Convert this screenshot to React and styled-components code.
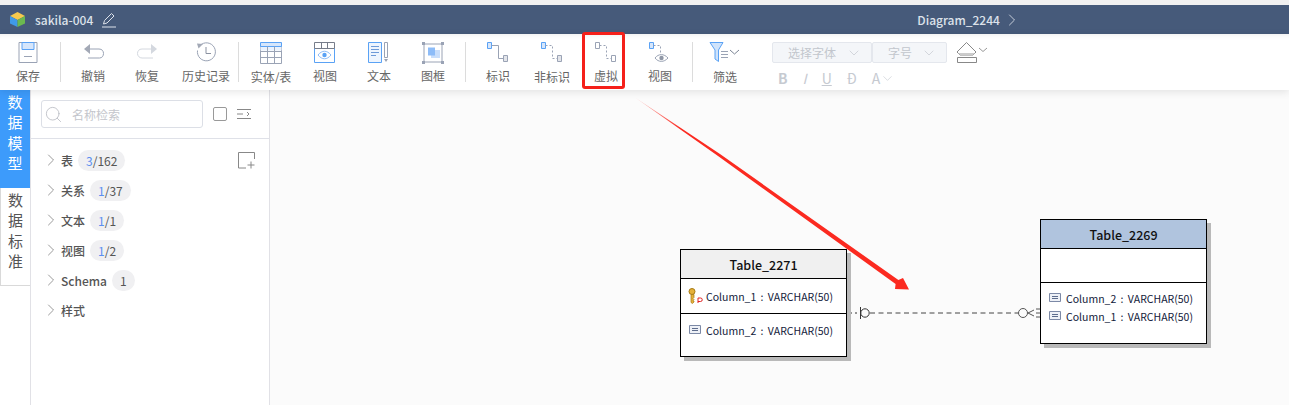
import React from "react";
import styled, { createGlobalStyle } from "styled-components";
import { ChevronRight, ChevronDown, Search } from "lucide-react";

const GlobalStyle = createGlobalStyle`
  html, body {
    margin: 0;
    background: #fff;
  }
  body {
    font-family: "Noto Sans CJK SC", "Noto Sans", sans-serif;
    font-size: 12px;
    color: #555;
  }
`;

const Page = styled.div`
  width: 1289px;
  height: 405px;
  overflow: hidden;
  display: flex;
  flex-direction: column;
  position: relative;
  border-top: 5px solid #f1f1f1;
  box-sizing: border-box;
`;

const Header = styled.header`
  height: 29px;
  flex: none;
  background: #465a7a;
  display: flex;
  align-items: center;
  padding-left: 9px;
  color: #dde2ea;
  position: relative;
`;

const ProjectName = styled.span`
  font-size: 12px;
  font-weight: 500;
  margin-left: 9px;
  margin-right: 8px;
`;

const DiagramTitle = styled.div`
  display: flex;
  align-items: center;
  gap: 2px;
  margin-left: 800px;
  font-size: 12px;
  font-weight: 500;
`;

const Toolbar = styled.div`
  height: 56px;
  flex: none;
  background: #fff;
  display: flex;
  align-items: flex-start;
  padding-left: 1px;
  box-shadow: 0 2px 8px rgba(0, 0, 0, 0.1), inset 0 6px 6px -6px rgba(0, 0, 0, 0.1);
  position: relative;
  z-index: 2;
`;

const Tool = styled.div`
  width: 54px;
  height: 56px;
  flex: none;
  display: flex;
  flex-direction: column;
  align-items: center;
  margin-left: ${p => p.$gap || 0}px;
  svg {
    height: 24px;
    margin-top: 7px;
    display: block;
  }
`;

const ToolLabel = styled.span`
  font-size: 12px;
  line-height: 16px;
  margin-top: ${p => (p.$low ? 4 : 3)}px;
  color: #666;
  white-space: nowrap;
`;

const Separator = styled.div`
  width: 1px;
  height: 40px;
  flex: none;
  background: #dcdcdc;
  margin: 8px 5px 0;
`;

const FontTools = styled.div`
  margin-left: 20px;
  margin-top: 7px;
  display: flex;
  flex-direction: column;
  gap: 4px;
`;

const FontRow = styled.div`
  display: flex;
  align-items: center;
`;

const FontSelect = styled.div`
  width: ${p => p.$width}px;
  height: 21px;
  box-sizing: border-box;
  background: #f4f6f9;
  border: 1px solid #e4e7ed;
  border-radius: 2px;
  display: flex;
  align-items: center;
  justify-content: space-between;
  padding: 0 9px 0 15px;
  color: #c2c6cd;
  font-size: 12px;
`;

const FillSlot = styled.span`
  margin-left: 9px;
  display: flex;
`;

const StyleRow = styled.div`
  display: flex;
  align-items: center;
  gap: 15px;
  padding-left: 6px;
  color: #c6cad1;
  font-size: 14px;
  line-height: 20px;
`;

const StyleGlyph = styled.span`
  display: flex;
  align-items: center;
  font-weight: ${p => (p.$bold ? 700 : 400)};
  font-style: ${p => (p.$italic ? "italic" : "normal")};
  text-decoration: ${p => (p.$underline ? "underline" : "none")};
`;

const Body = styled.div`
  flex: 1;
  display: flex;
  min-height: 0;
`;

const TabRail = styled.nav`
  width: 31px;
  flex: none;
  border-right: 1px solid #e1e1e6;
  box-sizing: border-box;
`;

const Tab = styled.div`
  width: 30px;
  height: 98px;
  box-sizing: border-box;
  display: flex;
  justify-content: center;
  text-align: center;
  font-size: 15px;
  line-height: 20.400px;
  padding: 2px 7px 0;
  background: ${p => (p.$active ? "#3d9bfb" : "#fff")};
  color: ${p => (p.$active ? "#fff" : "#555")};
  border-bottom: ${p => (p.$active ? "none" : "1px solid #d9d9d9")};
  border-left: ${p => (p.$active ? "none" : "1px solid #d9d9d9")};
`;

const Panel = styled.aside`
  width: 239px;
  flex: none;
  border-right: 1px solid #e1e1e6;
  box-sizing: border-box;
  background: #fff;
`;

const SearchBar = styled.div`
  height: 49px;
  box-sizing: border-box;
  border-bottom: 1px solid #dfe1e8;
  display: flex;
  align-items: center;
  padding: 0 17px 0 10px;
`;

const SearchBox = styled.div`
  width: 162px;
  height: 28px;
  box-sizing: border-box;
  border: 1px solid #dcdfe6;
  border-radius: 3px;
  display: flex;
  align-items: center;
  padding-left: 2px;
  gap: 9px;
  color: #c4c6cc;
  font-size: 12px;
`;

const CheckBox = styled.div`
  width: 14px;
  height: 14px;
  box-sizing: border-box;
  border: 1px solid #999;
  border-radius: 2px;
  margin-left: 10px;
  margin-right: 10px;
`;

const TreeList = styled.ul`
  list-style: none;
  margin: 6px 0 0;
  padding: 0 0 0 10px;
  position: relative;
`;

const TreeRow = styled.li`
  height: 30px;
  display: flex;
  align-items: center;
  color: #555;
  font-size: 12px;
  font-weight: 500;
`;

const Count = styled.span`
  height: 21px;
  box-sizing: border-box;
  padding: 0 8px;
  margin-left: 5px;
  border-radius: 11px;
  background: #f0f0f2;
  display: flex;
  align-items: center;
  font-weight: 400;
`;

const Selected = styled.span`
  color: #5b8ff0;
`;

const AddButton = styled.svg`
  position: absolute;
  right: 14px;
  top: 7px;
`;

const Canvas = styled.main`
  flex: 1;
  position: relative;
  background: #fbfbfb;
  overflow: hidden;
`;

const Drawing = styled.svg`
  position: absolute;
  left: 0;
  top: 0;
`;

const TableNode = styled.div`
  position: absolute;
  left: ${p => p.$x}px;
  top: ${p => p.$y}px;
  width: 167px;
  box-sizing: border-box;
  background: #fff;
  border: 1.5px solid #000;
  box-shadow: 4px 4px 0 #b9b9b9;
  color: #111;
`;

const TableTitle = styled.div`
  height: 29px;
  box-sizing: border-box;
  border-bottom: 1.5px solid #000;
  background: ${p => p.$fill};
  font-size: 12.5px;
  font-weight: 500;
  display: flex;
  align-items: center;
  justify-content: center;
`;

const TableSection = styled.div`
  height: ${p => p.$height}px;
  box-sizing: border-box;
  padding: ${p => p.$pad}px 0 0 8px;
  border-top: ${p => (p.$line ? "1.5px solid #000" : "none")};
`;

const ColumnRow = styled.div`
  height: 18px;
  display: flex;
  align-items: center;
  font-size: 10.500px;
  word-spacing: 2px;
  color: #12203a;
  white-space: nowrap;
`;

const ColumnIcon = styled.span`
  width: 17px;
  flex: none;
  display: flex;
  align-items: center;
`;

const KeySvg = styled.svg`
  margin-left: -1.500px;
  flex: none;
`;

const RedBox = styled.div`
  position: absolute;
  left: 582px;
  top: 27px;
  width: 43px;
  height: 57px;
  box-sizing: border-box;
  border: 3px solid #f5201a;
  border-radius: 3px;
  z-index: 3;
`;

const grayLine = "#9aa3b5";
const blueLine = "#5aa2f5";

const SaveIcon = () => (
  <svg width="22" height="24" viewBox="0 0 22 24" fill="none">
    <path d="M2 1.500h18v20H2z" stroke={grayLine} />
    <path d="M5 1.500h12v7H5z" fill="#d6e6fb" stroke={blueLine} />
    <path d="M7 15.500h8" stroke={grayLine} />
  </svg>
);

const UndoIcon = () => (
  <svg width="24" height="24" viewBox="0 0 24 24" fill="none">
    <path d="M3 8l6-5v10z" fill="#a3a9b6" />
    <path d="M9 8h9c3 0 4.500 2 4.500 4.500s-1.500 4.500-4 4.500H7" stroke={grayLine} />
  </svg>
);

const RedoIcon = () => (
  <svg width="22" height="24" viewBox="0 0 22 24" fill="none">
    <path d="M21 8l-6-5v10z" fill="#d4d8df" />
    <path d="M15 8H6c-3 0-4.500 2-4.500 4.500S3.500 17 6 17h11" stroke="#d4d8df" />
  </svg>
);

const HistoryIcon = () => (
  <svg width="22" height="24" viewBox="0 0 22 24" fill="none">
    <path d="M5 4.500a9 9 0 1 1-2.500 5" stroke={grayLine} />
    <path d="M2 2.500l6 .5-4.500 4.500z" fill="#a3a9b6" />
    <path d="M11 6v6.500h5" stroke="#8b92a1" />
  </svg>
);

const TableIcon = () => (
  <svg width="22" height="24" viewBox="0 0 22 24" fill="none">
    <path d="M.5 3.500h21v19H.5z" stroke={grayLine} />
    <path d="M.5 5.500h21v4H.5z" fill="#eaf2fd" />
    <path d="M.5 1.500h21v4H.5z" fill="#d6e6fb" stroke={blueLine} />
    <path d="M.5 10.500h21M.5 16.500h21M7.500 5.500v17M14.500 5.500v17" stroke={grayLine} />
  </svg>
);

const ViewIcon = () => (
  <svg width="22" height="24" viewBox="0 0 22 24" fill="none">
    <path d="M.5 7.500h20v14H.5z" stroke={blueLine} />
    <path d="M.5 1.500h20v6H.5zM7.500 1.500v6M13.500 1.500v6" stroke="#777d8a" />
    <path d="M4 14c4-5 9-5 13 0-4 5-9 5-13 0z" stroke="#8dbcf8" />
    <circle cx="10.500" cy="14" r="2.200" fill={blueLine} />
  </svg>
);

const TextIcon = () => (
  <svg width="22" height="24" viewBox="0 0 22 24" fill="none">
    <path d="M.5 1.500h13v20H.5z" fill="#eef5fe" stroke={blueLine} />
    <path d="M3 5.500h8M3 8.500h8M3 11.500h8M3 14.500h5" stroke="#6d9ad8" />
    <path d="M16.500 1.500h3v15h-3z" stroke={grayLine} />
    <path d="M16 18h4l-2 3z" fill={grayLine} />
  </svg>
);

const FrameIcon = () => (
  <svg width="22" height="24" viewBox="0 0 22 24" fill="none">
    <path d="M2 3h18v18H2z" stroke={grayLine} />
    <path d="M0 1h3v3H0zM19 1h3v3h-3zM0 20h3v3H0zM19 20h3v3h-3z" fill={grayLine} />
    <path d="M9 9h9v8H9z" fill="#c9defb" />
    <path d="M6 6.500h7v8H6z" fill="#8dbcf8" />
  </svg>
);

const RelationIcon = ({ dashed, plain }) => (
  <svg width="22" height="24" viewBox="0 0 22 24" fill="none">
    <path d="M.5 1.500h4v6h-4z" fill={plain ? "none" : "#d6e6fb"} stroke={plain ? grayLine : blueLine} />
    <path d="M4.500 4.500h7v13h5" stroke={grayLine} strokeDasharray={dashed ? "2 2" : undefined} />
    <path d="M16.500 14.500h4v6h-4z" fill={plain ? "none" : "#e3e5ea"} stroke={grayLine} />
  </svg>
);

const RelationViewIcon = () => (
  <svg width="22" height="24" viewBox="0 0 22 24" fill="none">
    <path d="M.5 1.500h4v6h-4z" fill="#d6e6fb" stroke={blueLine} />
    <path d="M4.500 4.500h7v7" stroke={grayLine} strokeDasharray="2 2" />
    <path d="M6 17c3.500-4.500 9-4.500 13 0-4 4.500-9.500 4.500-13 0z" stroke={grayLine} />
    <circle cx="12.500" cy="17" r="2.200" fill="#8f96a5" />
  </svg>
);

const FilterIcon = () => (
  <svg width="33" height="24" viewBox="0 0 33 24" fill="none">
    <path d="M1 1.500h13L9.500 9v11.500L6 18V9z" fill="#cfe3fb" stroke={blueLine} />
    <path d="M12 10.500h7M12 13.500h7M12 16.500h7" stroke={grayLine} />
    <path d="M21 9l4.500 4L30 9" stroke="#7b8494" />
  </svg>
);

const FillIcon = () => (
  <svg width="33" height="23" viewBox="0 0 33 23" fill="none">
    <path d="M1 11L10.500 1.500 20 11l-3 3H4z" stroke="#888" fill="#fff" />
    <path d="M2 12h17l-2 2H4z" fill="#ccc" />
    <path d="M1.500 16.500h19v5h-19z" stroke="#888" />
    <path d="M23 7l4 3.500L31 7" stroke="#999" />
  </svg>
);

const CubeLogo = () => (
  <svg width="17" height="17" viewBox="0 0 17 17">
    <path d="M8.500 1L16 5 8.500 9 1 5z" fill="#f5c94e" />
    <path d="M1 5l7.500 4v7L1 12.500z" fill="#3f9ae8" />
    <path d="M16 5L8.500 9v7l7.500-3.500z" fill="#6bb84f" />
  </svg>
);

const PencilIcon = () => (
  <svg width="16" height="16" viewBox="0 0 16 16" fill="none" stroke="#dde2ea">
    <path d="M2.500 12l1-3.500 7-7 2.500 2.500-7 7z" />
    <path d="M1 15h14" />
  </svg>
);

const CollapseIcon = () => (
  <svg width="14" height="12" viewBox="0 0 14 12" fill="none" stroke="#888">
    <path d="M0 1.500h14M0 10.500h14M0 6h6M10 4l2 2-2 2" />
  </svg>
);

const ColumnGlyph = () => (
  <svg width="12" height="10" viewBox="0 0 12 10" fill="none">
    <path d="M.5.500h11v8H.5z" fill="#eef1f7" stroke="#7c89a6" />
    <path d="M3 3.500h6M3 5.500h6" stroke="#5d6c8c" />
  </svg>
);

const KeyGlyph = () => (
  <KeySvg width="16" height="16" viewBox="0 0 16 16" fill="none">
    <circle cx="4" cy="3.500" r="3" fill="#e5b13a" stroke="#a67a14" />
    <path d="M3 6.500v8l1.500 1 1.500-1.500v-1l-1-.5 1-1-1-1 1-1V6.500z" fill="#e5b13a" stroke="#a67a14" strokeWidth=".7" />
    <path d="M10 15V10h2.500a1.500 1.500 0 0 1 0 3.500H10" stroke="#e02020" />
  </KeySvg>
);

const tools = [
  { icon: <SaveIcon />, label: "保存" },
  { sep: true },
  { icon: <UndoIcon />, label: "撤销" },
  { icon: <RedoIcon />, label: "恢复" },
  { icon: <HistoryIcon />, label: "历史记录", gap: 5 },
  { sep: true },
  { icon: <TableIcon />, label: "实体/表", low: true },
  { icon: <ViewIcon />, label: "视图" },
  { icon: <TextIcon />, label: "文本" },
  { icon: <FrameIcon />, label: "图框" },
  { sep: true },
  { icon: <RelationIcon />, label: "标识" },
  { icon: <RelationIcon dashed />, label: "非标识", low: true },
  { icon: <RelationIcon dashed plain />, label: "虚拟" },
  { icon: <RelationViewIcon />, label: "视图" },
  { sep: true },
  { icon: <FilterIcon />, label: "筛选", low: true },
];

const tree = [
  { label: "表", picked: "3", total: "/162" },
  { label: "关系", picked: "1", total: "/37" },
  { label: "文本", picked: "1", total: "/1" },
  { label: "视图", picked: "1", total: "/2" },
  { label: "Schema", total: "1" },
  { label: "样式" },
];

export default function App() {
  return (
    <Page>
      <GlobalStyle />
      <Header>
        <CubeLogo />
        <ProjectName>sakila-004</ProjectName>
        <PencilIcon />
        <DiagramTitle>
          Diagram_2244
          <ChevronRight size={20} strokeWidth={1} />
        </DiagramTitle>
      </Header>

      <Toolbar>
        {tools.map((t, i) =>
          t.sep ? (
            <Separator key={i} />
          ) : (
            <Tool key={i} $gap={t.gap}>
              {t.icon}
              <ToolLabel $low={t.low}>{t.label}</ToolLabel>
            </Tool>
          )
        )}
        <FontTools>
          <FontRow>
            <FontSelect $width={100}>
              选择字体
              <ChevronDown size={16} strokeWidth={1} />
            </FontSelect>
            <FontSelect $width={75}>
              字号
              <ChevronDown size={16} strokeWidth={1} />
            </FontSelect>
            <FillSlot>
              <FillIcon />
            </FillSlot>
          </FontRow>
          <StyleRow>
            <StyleGlyph $bold>B</StyleGlyph>
            <StyleGlyph $italic>I</StyleGlyph>
            <StyleGlyph $underline>U</StyleGlyph>
            <StyleGlyph>Đ</StyleGlyph>
            <StyleGlyph>
              A
              <ChevronDown size={15} strokeWidth={1} />
            </StyleGlyph>
          </StyleRow>
        </FontTools>
      </Toolbar>
      <RedBox />

      <Body>
        <TabRail>
          <Tab $active>数据模型</Tab>
          <Tab>数据标准</Tab>
        </TabRail>
        <Panel>
          <SearchBar>
            <SearchBox>
              <Search size={19} strokeWidth={1} color="#b5b8bf" />
              名称检索
            </SearchBox>
            <CheckBox />
            <CollapseIcon />
          </SearchBar>
          <TreeList>
            {tree.map(row => (
              <TreeRow key={row.label}>
                <ChevronRight size={20} strokeWidth={0.9} color="#777" />
                {row.label}
                {row.total && (
                  <Count>
                    {row.picked && <Selected>{row.picked}</Selected>}
                    {row.total}
                  </Count>
                )}
              </TreeRow>
            ))}
            <AddButton width="17" height="17" viewBox="0 0 17 17" fill="none" stroke="#888">
              <path d="M16.500 7V.5H.5v15.500H8" />
              <path d="M13 9.500v7M9.500 13h7" />
            </AddButton>
          </TreeList>
        </Panel>
        <Canvas>
          <Drawing width="1019" height="315" viewBox="270 90 1019 315" fill="none">
            <path d="M847 313h10" stroke="#333" strokeDasharray="5 3" />
            <path d="M870 313h148" stroke="#444" strokeDasharray="5 3.500" />
            <path d="M860.500 307v12" stroke="#333" />
            <circle cx="865" cy="313" r="4.200" stroke="#333" fill="#fbfbfb" />
            <circle cx="1023" cy="313" r="4.500" stroke="#555" fill="#fbfbfb" />
            <path d="M1028 313l6-3M1028 313l6 3M1036 309h4M1036 313h4M1036 317h4" stroke="#555" />
          </Drawing>
          <TableNode $x={410} $y={159}>
            <TableTitle $fill="#f0f0f0">Table_2271</TableTitle>
            <TableSection $height={34} $pad={8}>
              <ColumnRow>
                <ColumnIcon><KeyGlyph /></ColumnIcon>
                Column_1 : VARCHAR(50)
              </ColumnRow>
            </TableSection>
            <TableSection $height={43} $pad={7} $line>
              <ColumnRow>
                <ColumnIcon><ColumnGlyph /></ColumnIcon>
                Column_2 : VARCHAR(50)
              </ColumnRow>
            </TableSection>
          </TableNode>
          <TableNode $x={770} $y={129}>
            <TableTitle $fill="#b0c4de">Table_2269</TableTitle>
            <TableSection $height={33} $pad={0} />
            <TableSection $height={61} $pad={6} $line>
              <ColumnRow>
                <ColumnIcon><ColumnGlyph /></ColumnIcon>
                Column_2 : VARCHAR(50)
              </ColumnRow>
              <ColumnRow>
                <ColumnIcon><ColumnGlyph /></ColumnIcon>
                Column_1 : VARCHAR(50)
              </ColumnRow>
            </TableSection>
          </TableNode>
          <Drawing width="1019" height="315" viewBox="270 90 1019 315" fill="none">
            <defs>
              <linearGradient id="arrowFade" gradientUnits="userSpaceOnUse" x1="635" y1="98" x2="680" y2="130">
                <stop offset="0" stopColor="#fb2a20" stopOpacity="0.2" />
                <stop offset="1" stopColor="#fb2a20" />
              </linearGradient>
            </defs>
            <path d="M635 97.500L720 154L898.400 280L903 278L909 289.500L895 289L895.600 284L718 156Z" fill="url(#arrowFade)" />
          </Drawing>
        </Canvas>
      </Body>
    </Page>
  );
}
